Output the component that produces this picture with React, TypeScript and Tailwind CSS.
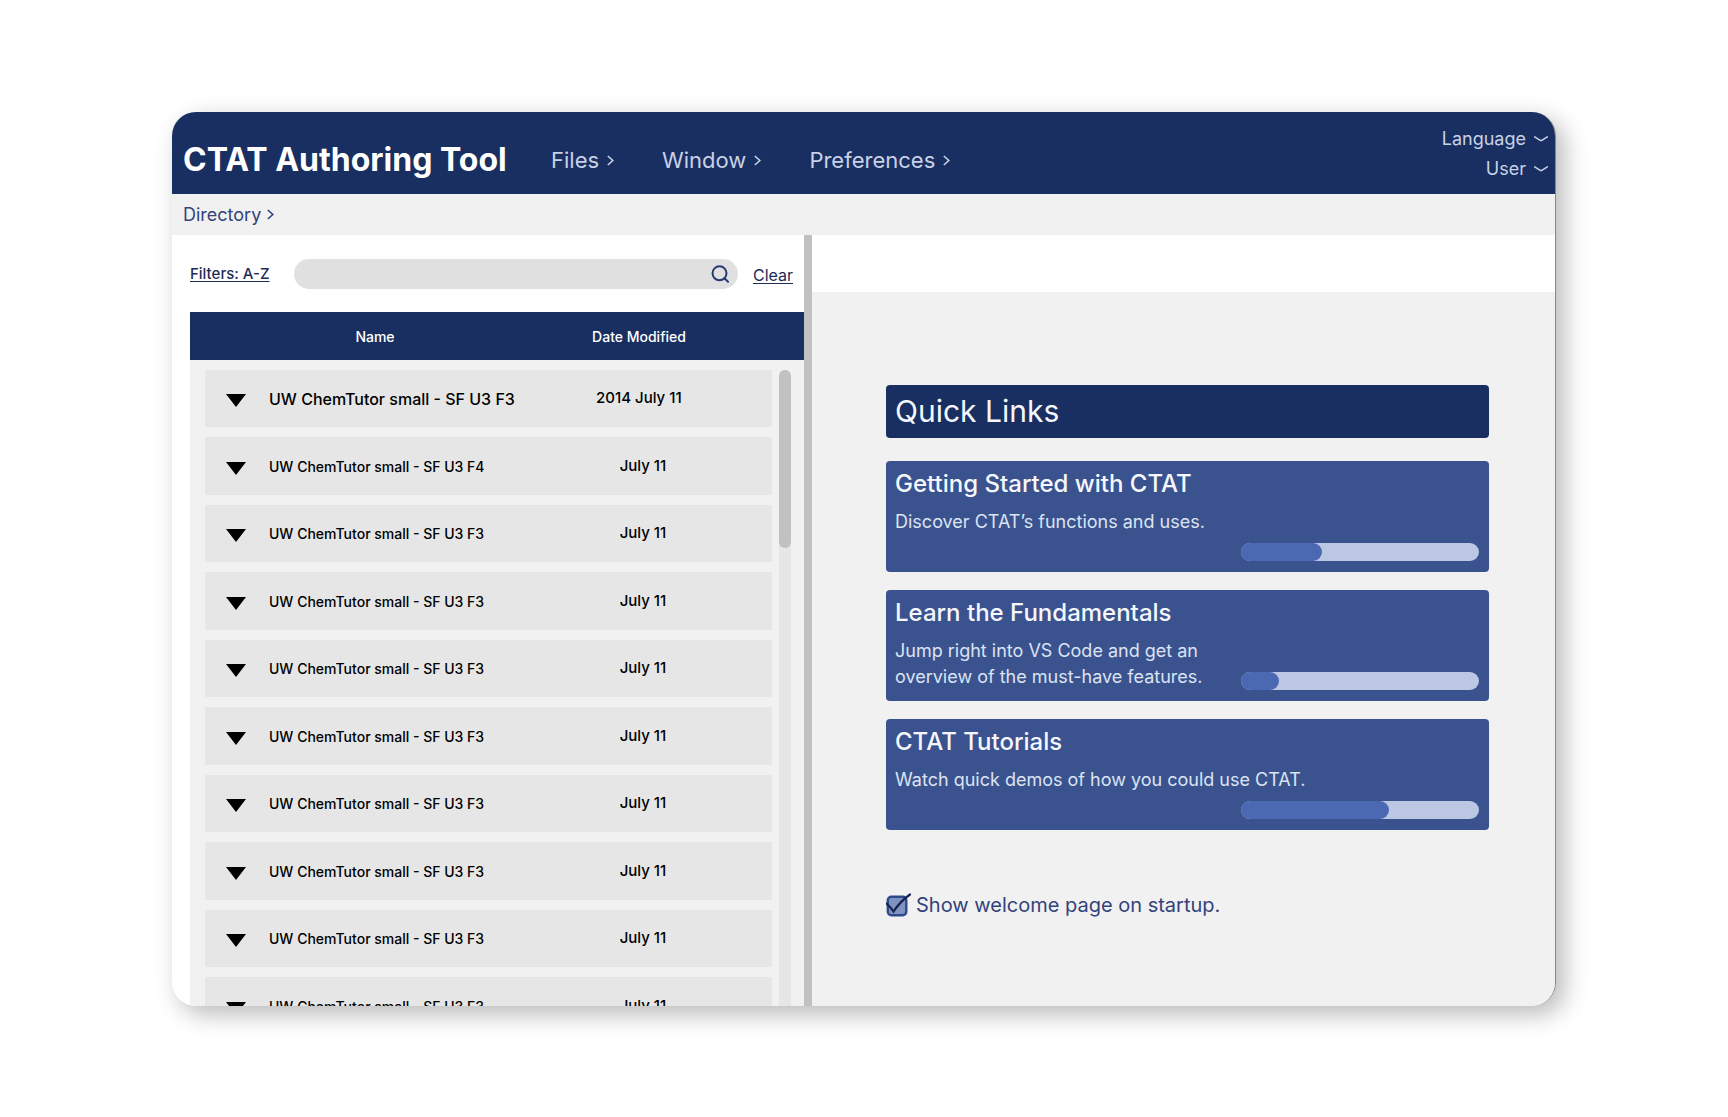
const files = [
  { name: "UW ChemTutor small - SF U3 F3", date: "2014 July 11", current: true },
  { name: "UW ChemTutor small - SF U3 F4", date: "July 11" },
  { name: "UW ChemTutor small - SF U3 F3", date: "July 11" },
  { name: "UW ChemTutor small - SF U3 F3", date: "July 11" },
  { name: "UW ChemTutor small - SF U3 F3", date: "July 11" },
  { name: "UW ChemTutor small - SF U3 F3", date: "July 11" },
  { name: "UW ChemTutor small - SF U3 F3", date: "July 11" },
  { name: "UW ChemTutor small - SF U3 F3", date: "July 11" },
  { name: "UW ChemTutor small - SF U3 F3", date: "July 11" },
  { name: "UW ChemTutor small - SF U3 F3", date: "July 11" },
];

const links = [
  { title: "Getting Started with CTAT", lines: ["Discover CTAT’s functions and uses."], progress: 34 },
  {
    title: "Learn the Fundamentals",
    lines: ["Jump right into VS Code and get an", "overview of the must-have features."],
    progress: 16,
  },
  { title: "CTAT Tutorials", lines: ["Watch quick demos of how you could use CTAT."], progress: 62 },
];

function ChevronDown() {
  return (
    <svg className="h-[6px] w-[14px]" viewBox="0 0 14 6" fill="none" aria-hidden="true">
      <path d="M0.7 0.8 L5.8 4.1 Q7 4.9 8.2 4.1 L13.3 0.8" stroke="#c9d1e6" strokeWidth="1.5" strokeLinecap="round" />
    </svg>
  );
}

function ChevronRight() {
  return (
    <svg className="h-[11px] w-[7px]" viewBox="0 0 7 11" fill="none" aria-hidden="true">
      <path d="M0.8 1 L5.8 5.5 L0.8 10" stroke="currentColor" strokeWidth="1.6" />
    </svg>
  );
}

function Header() {
  return (
    <header className="flex h-[82px] shrink-0 items-start justify-between bg-[#192f62] pr-[7px] pl-[11px] text-[#c9d1e6]">
      <div className="flex items-center pt-7">
        <h1 className="w-[368px] text-[32px] leading-10 font-bold whitespace-nowrap text-white">CTAT Authoring Tool</h1>
        <nav className="flex gap-12 text-[22px] leading-10 whitespace-nowrap">
          {["Files", "Window", "Preferences"].map((item) => (
            <button key={item} type="button" className="flex items-center gap-2">
              {item} <ChevronRight />
            </button>
          ))}
        </nav>
      </div>
      <div className="flex flex-col items-end pt-3 text-[18px] leading-[30px]">
        <button type="button" className="flex items-center gap-2">
          Language <ChevronDown />
        </button>
        <button type="button" className="flex items-center gap-2">
          User <ChevronDown />
        </button>
      </div>
    </header>
  );
}

function FileTable() {
  return (
    <table className="ml-[18px] flex min-h-0 flex-1 flex-col overflow-hidden bg-[#f1f1f1] text-black">
      <thead className="block bg-[#192f62] text-[14px] text-white">
        <tr className="grid h-12 grid-cols-[370fr_158fr_86fr] items-center">
          <th scope="col" className="font-medium">Name</th>
          <th scope="col" className="font-medium">Date Modified</th>
        </tr>
      </thead>
      <tbody className="flex flex-col gap-[10px] pt-[10px] pr-8 pl-[15px]">
        {files.map((file, i) => (
          <tr
            key={i}
            className="grid h-[57px] shrink-0 grid-cols-[64px_1fr_258px] items-center bg-[#e6e6e6] font-medium even:h-[58px]"
          >
            <td className="pt-1 pl-[21px]">
              <button type="button" aria-label="Expand row" className="block">
                <svg className="h-[13px] w-5" viewBox="0 0 20 13" aria-hidden="true">
                  <path d="M0 0 H20 L10 13 Z" fill="#000" />
                </svg>
              </button>
            </td>
            <td className={file.current ? "text-[16px] whitespace-nowrap" : "text-[14px] whitespace-nowrap"}>{file.name}</td>
            <td className={file.current ? "pr-[10px] text-center text-[15px]" : "text-center text-[15px]"}>{file.date}</td>
          </tr>
        ))}
      </tbody>
    </table>
  );
}

function DirectoryPanel() {
  return (
    <section className="relative flex min-h-0 flex-col overflow-hidden bg-white">
      <div className="flex h-[77px] shrink-0 items-center pr-[11px] pl-[18px] text-[#202b58]">
        <button type="button" className="w-[104px] pt-0.5 text-left text-[15px] font-medium whitespace-nowrap underline underline-offset-2">
          Filters: A-Z
        </button>
        <div className="flex h-[30px] flex-1 items-center rounded-full bg-[#e0e0e0] pr-[9px] pl-4">
          <input type="search" aria-label="Search files" className="min-w-0 flex-1 bg-transparent text-[15px] outline-none" />
          <button type="button" aria-label="Search">
            <svg className="size-[18px]" viewBox="0 0 18 18" fill="none" stroke="#253a70" strokeWidth="2" aria-hidden="true">
              <circle cx="8.5" cy="8.3" r="7" />
              <path d="M13.5 13.3 L17 16.8" strokeLinecap="round" />
            </svg>
          </button>
        </div>
        <button type="button" className="ml-[15px] pt-0.5 text-[16px] underline underline-offset-2">
          Clear
        </button>
      </div>
      <FileTable />
      <div className="absolute top-[135px] right-[13px] bottom-0 w-3 rounded-t-full bg-[#e6e6e6]">
        <div className="h-[178px] rounded-full bg-[#c1c1c1]" />
      </div>
    </section>
  );
}

function QuickLink({ title, lines, progress }: { title: string; lines: string[]; progress: number }) {
  return (
    <a href="#" className="block rounded-[4px] bg-[#3a538f] pt-2 pr-[10px] pb-[11px] pl-[9px]">
      <h3 className="text-[24px] leading-[30px] font-medium text-[#f5f7fc]">{title}</h3>
      <div className="mt-[10px] grid min-h-[52px]">
        <p className="col-start-1 row-start-1 text-[18px] leading-[26px] text-[#dce3f3]">
          {lines.map((line) => (
            <span key={line} className="block">{line}</span>
          ))}
        </p>
        <div
          role="progressbar"
          aria-label={title}
          aria-valuenow={progress}
          aria-valuemin={0}
          aria-valuemax={100}
          className="col-start-1 row-start-1 h-[18px] w-[238px] self-end justify-self-end rounded-full bg-[#bcc7e4]"
        >
          <div className="h-full rounded-full bg-[#4a69b2]" style={{ width: `${progress}%` }} />
        </div>
      </div>
    </a>
  );
}

function WelcomePanel() {
  return (
    <section className="flex min-h-0 flex-col bg-[#f1f1f1]">
      <div className="h-[57px] shrink-0 bg-white" />
      <div className="pt-[93px] pr-[66px] pl-[74px]">
        <h2 className="rounded-[4px] bg-[#192f62] pl-[9px] text-[30px] leading-[53px] text-[#f5f7fc]">Quick Links</h2>
        <div className="mt-[23px] flex flex-col gap-[18px]">
          {links.map((link) => (
            <QuickLink key={link.title} {...link} />
          ))}
        </div>
        <label className="mt-[61px] flex items-center gap-[5px] text-[20px] leading-7 whitespace-nowrap text-[#33437c]">
          <span className="relative block size-[25px] shrink-0">
            <input type="checkbox" defaultChecked className="absolute inset-0 size-full appearance-none" />
            <svg className="pointer-events-none relative size-full" viewBox="0 0 25 25" fill="none" aria-hidden="true">
              <rect x="1.8" y="3.8" width="18.5" height="18.5" rx="3.5" fill="#8092c0" stroke="#2e4a8c" strokeWidth="2.4" />
              <path d="M0.5 10.5 Q4.5 14 7.5 18.5 Q14 8.5 24 1.5" stroke="#15234f" strokeWidth="2.2" strokeLinecap="round" />
            </svg>
          </span>
          Show welcome page on startup.
        </label>
      </div>
    </section>
  );
}

export default function App() {
  return (
    <div className="flex h-screen flex-col bg-white px-[172px] pt-28 pb-[111px] font-['Inter',sans-serif]">
      <main className="flex min-h-0 flex-1 flex-col overflow-hidden rounded-[24px] border-r border-[#888888] bg-[#f1f1f1] shadow-[8px_8px_24px_rgba(0,0,0,0.28)]">
        <Header />
        <div className="flex h-[41px] shrink-0 items-center px-[11px] text-[18px] text-[#33437c]">
          <button type="button" className="flex items-center gap-[6px]">
            Directory <ChevronRight />
          </button>
        </div>
        <div className="grid min-h-0 flex-1 grid-cols-[632fr_8fr_743fr]">
          <DirectoryPanel />
          <div className="bg-[#c1c1c1]" />
          <WelcomePanel />
        </div>
      </main>
    </div>
  );
}
